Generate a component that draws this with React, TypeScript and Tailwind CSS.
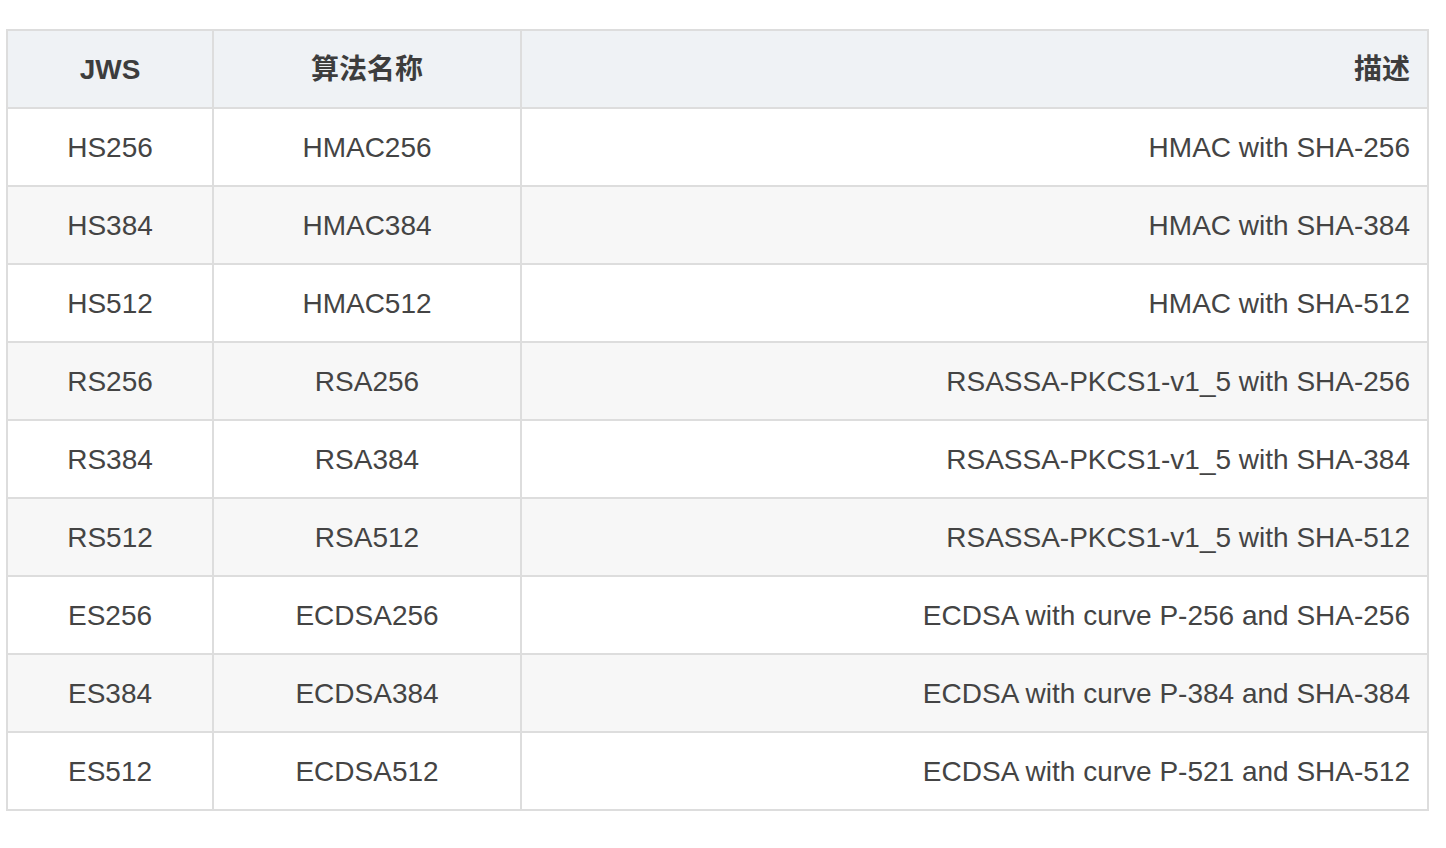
const ROWS: [string, string, string][] = [
  ['HS256', 'HMAC256', 'HMAC with SHA-256'],
  ['HS384', 'HMAC384', 'HMAC with SHA-384'],
  ['HS512', 'HMAC512', 'HMAC with SHA-512'],
  ['RS256', 'RSA256', 'RSASSA-PKCS1-v1_5 with SHA-256'],
  ['RS384', 'RSA384', 'RSASSA-PKCS1-v1_5 with SHA-384'],
  ['RS512', 'RSA512', 'RSASSA-PKCS1-v1_5 with SHA-512'],
  ['ES256', 'ECDSA256', 'ECDSA with curve P-256 and SHA-256'],
  ['ES384', 'ECDSA384', 'ECDSA with curve P-384 and SHA-384'],
  ['ES512', 'ECDSA512', 'ECDSA with curve P-521 and SHA-512'],
]

export default function App() {
  return (
    <div
      className="min-h-screen bg-white pl-[6px] pt-[29px] text-[28px] text-[#444]"
      style={{ fontFamily: '"Liberation Sans", Arial, "Noto Sans CJK SC", sans-serif' }}
    >
      <table className="w-[1423px] table-fixed border-collapse border-2 border-[#dddddd]">
        <colgroup>
          <col className="w-[206px]" />
          <col className="w-[308px]" />
          <col />
        </colgroup>
        <thead>
          <tr className="h-[78px] bg-[#eff2f5]">
            <th className="border-2 border-[#dddddd] px-5 pt-[2px] text-center font-bold text-[#3d3d3d]">JWS</th>
            <th className="border-2 border-[#dddddd] px-5 pt-[2px] text-center font-bold text-[#3d3d3d]">算法名称</th>
            <th className="border-2 border-[#dddddd] pl-5 pr-[17px] pt-[2px] text-right font-bold text-[#3d3d3d]">描述</th>
          </tr>
        </thead>
        <tbody>
          {ROWS.map(([jws, name, desc], i) => (
            <tr key={jws} className={i % 2 === 1 ? 'h-[78px] bg-[#f7f7f7]' : 'h-[78px] bg-white'}>
              <td className="border-2 border-[#dddddd] px-5 pt-[2px] text-center">{jws}</td>
              <td className="border-2 border-[#dddddd] px-5 pt-[2px] text-center">{name}</td>
              <td className="border-2 border-[#dddddd] pl-5 pr-[17px] pt-[2px] text-right">{desc}</td>
            </tr>
          ))}
        </tbody>
      </table>
    </div>
  )
}
